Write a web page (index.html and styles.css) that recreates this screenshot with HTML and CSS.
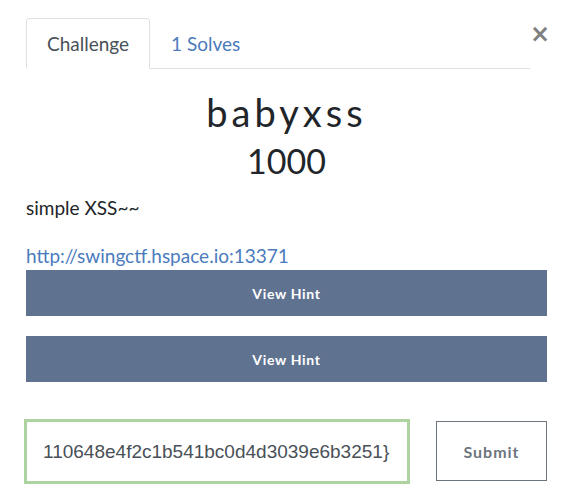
FILE: index.html
```html
<!DOCTYPE html>
<html>
<head>
<meta charset="utf-8">
<link rel="stylesheet" href="styles.css">
</head>
<body>
<div class="modal">
  <div class="header">
    <ul class="tabs">
      <li class="tab active">Challenge</li>
      <li class="tab">1 Solves</li>
    </ul>
    <button class="close">&times;</button>
  </div>
  <h3 class="title">babyxss</h3>
  <h4 class="value">1000</h4>
  <p class="desc">simple XSS~~</p>
  <a class="link" href="#">http://swingctf.hspace.io:13371</a>
  <div class="hints">
    <button class="hint">View Hint</button>
    <button class="hint">View Hint</button>
  </div>
  <div class="submit-row">
    <input class="answer" type="text" value="110648e4f2c1b541bc0d4d3039e6b3251}">
    <button class="submit">Submit</button>
  </div>
</div>
</body>
</html>
```

FILE: styles.css
```css
* { box-sizing: border-box; }
body {
  margin: 0;
  background: #fff;
  font-family: Lato, "Open Sans", sans-serif;
  color: #212529;
}
.modal {
  width: 565px;
  height: 498px;
  padding: 18px 18px 0 26px;
}
.header {
  display: flex;
  align-items: flex-start;
}
.tabs {
  flex: 1;
  display: flex;
  list-style: none;
  margin: 0;
  padding: 0;
  border-bottom: 1px solid #dee2e6;
}
.tab {
  margin-bottom: -1px;
  padding: 12px 20px;
  font-size: 19px;
  line-height: 25px;
  color: #4b7bbd;
  border: 1px solid transparent;
  border-radius: 4px 4px 0 0;
}
.tab.active {
  color: #495057;
  border-color: #dee2e6 #dee2e6 #fff;
  background: #fff;
}
.close {
  width: 17px;
  margin: 4px 0 0 0;
  padding: 0;
  border: 0;
  background: none;
  font-family: "DejaVu Sans", sans-serif;
  font-size: 24px;
  line-height: 24px;
  font-weight: bold;
  color: #808080;
  text-align: center;
}
.title {
  margin: 20px 0 0;
  text-align: center;
  font-weight: 400;
  font-size: 38px;
  line-height: 46px;
  letter-spacing: 4px;
}
.value {
  margin: 6px 0 0;
  text-align: center;
  font-weight: 400;
  font-size: 34px;
  line-height: 40px;
}
.desc {
  margin: 13px 0 0;
  font-size: 19px;
  line-height: 28px;
}
.link {
  display: block;
  margin-top: 20px;
  font-size: 19px;
  line-height: 28px;
  color: #4b7bbd;
  text-decoration: none;
}
.hints {
  display: flex;
  flex-direction: column;
  gap: 20px;
}
.hint {
  height: 46px;
  border: 0;
  background: #5f7290;
  color: #fff;
  font-family: Lato, sans-serif;
  font-weight: 700;
  font-size: 14px;
  letter-spacing: 0.7px;
}
.submit-row {
  display: flex;
  gap: 28px;
  margin-top: 39px;
}
.answer {
  width: 382px;
  height: 61px;
  padding: 0 16px;
  border: 1px solid #acd3a0;
  box-shadow: 0 0 0 2px #acd3a0;
  outline: none;
  font-family: "Liberation Sans", Arial, sans-serif;
  font-size: 19px;
  color: #495057;
}
.submit {
  width: 111px;
  height: 60px;
  border: 1px solid #6c757d;
  background: #fff;
  color: #6c757d;
  font-family: Lato, sans-serif;
  font-weight: 700;
  font-size: 16px;
  letter-spacing: 1px;
}
```
